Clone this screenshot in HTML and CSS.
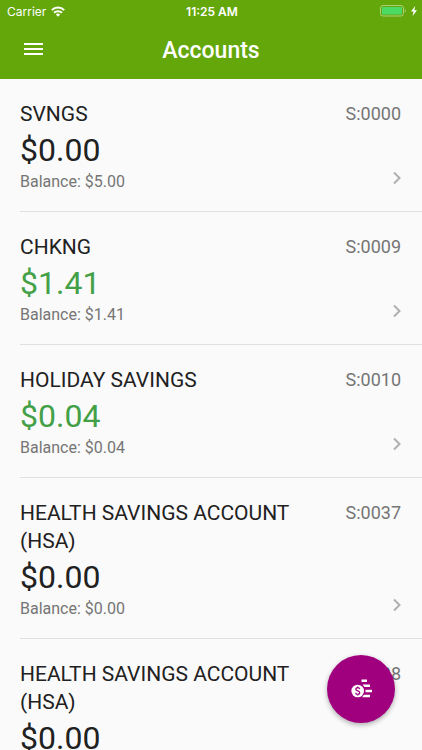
FILE: index.html
```html
<!DOCTYPE html>
<html lang="en">

<head>
    <meta charset="UTF-8" />
    <meta name="viewport" content="width=device-width, initial-scale=1.0" />
    <title>Accounts</title>
    <link rel="stylesheet" href="styles.css">
</head>

<body>
    <header class="header">
        <div class="status">
            <div class="carrier">
                <span>Carrier</span>
                <svg width="14" height="11" viewBox="0 0 14 11" fill="none" stroke="#fff" stroke-width="2">
                    <path d="M0.8 4.1a8.8 8.8 0 0 1 12.4 0" />
                    <path d="M3 6.8a5.7 5.7 0 0 1 8 0" />
                    <path d="M7 10.8L4.8 8.600a3 3 0 0 1 4.400 0z" fill="#fff" stroke="none" />
                </svg>
            </div>
            <div class="time">11:25 AM</div>
            <div class="power">
                <svg width="26" height="12" viewBox="0 0 26 12">
                    <rect x="0.5" y="0.5" width="23" height="10.5" rx="2.5" fill="none" stroke="#a9d07a" />
                    <rect x="2" y="2" width="20" height="7.5" rx="1" fill="#4cd964" />
                    <path d="M24.7 4v3.6a2 2 0 0 0 0-3.6z" fill="#a9d07a" />
                </svg>
                <svg width="6" height="10" viewBox="0 0 6 10" fill="#fff">
                    <path d="M4.2 0L0 5.6h2.5L1.6 10L6 4.2H3.4z" />
                </svg>
            </div>
        </div>
        <div class="toolbar">
            <button class="menu" type="button" aria-label="Menu">
                <svg width="20" height="14" viewBox="0 0 20 14" fill="#fff">
                    <path d="M0 1h19v2H0zM0 6h19v2H0zM0 11h19v2H0z" />
                </svg>
            </button>
            <h1>Accounts</h1>
        </div>
    </header>

    <main class="accounts">
        <a class="account" href="#">
            <div class="info">
                <h2>SVNGS</h2>
                <div class="amount">$0.00</div>
                <div class="balance">Balance: $5.00</div>
            </div>
            <div class="side">
                <span class="number">S:0000</span>
                <svg class="chevron" width="9" height="14" viewBox="0 0 9 14"><path d="M2 1.500L7.500 7L2 12.500" /></svg>
            </div>
        </a>
        <a class="account" href="#">
            <div class="info">
                <h2>CHKNG</h2>
                <div class="amount positive">$1.41</div>
                <div class="balance">Balance: $1.41</div>
            </div>
            <div class="side">
                <span class="number">S:0009</span>
                <svg class="chevron" width="9" height="14" viewBox="0 0 9 14"><path d="M2 1.500L7.500 7L2 12.500" /></svg>
            </div>
        </a>
        <a class="account" href="#">
            <div class="info">
                <h2>HOLIDAY SAVINGS</h2>
                <div class="amount positive">$0.04</div>
                <div class="balance">Balance: $0.04</div>
            </div>
            <div class="side">
                <span class="number">S:0010</span>
                <svg class="chevron" width="9" height="14" viewBox="0 0 9 14"><path d="M2 1.500L7.500 7L2 12.500" /></svg>
            </div>
        </a>
        <a class="account" href="#">
            <div class="info">
                <h2>HEALTH SAVINGS ACCOUNT (HSA)</h2>
                <div class="amount">$0.00</div>
                <div class="balance">Balance: $0.00</div>
            </div>
            <div class="side">
                <span class="number">S:0037</span>
                <svg class="chevron" width="9" height="14" viewBox="0 0 9 14"><path d="M2 1.500L7.500 7L2 12.500" /></svg>
            </div>
        </a>
        <a class="account" href="#">
            <div class="info">
                <h2>HEALTH SAVINGS ACCOUNT (HSA)</h2>
                <div class="amount">$0.00</div>
            </div>
            <div class="side">
                <span class="number">S:0038</span>
            </div>
        </a>
    </main>

    <!-- Floating action button -->
    <button class="fab" type="button" aria-label="Move money">
        <svg width="22" height="20" viewBox="0 0 22 20" fill="#fff">
            <path d="M11.500 0.500h5.500v2.500h-5.500zM12.500 5.500h7.500v2.500h-5.500zM15.500 10.700h6.500v2.500h-6.500zM14 15.800h6v2.500h-8z" />
            <circle cx="7.700" cy="12" r="6.300" />
            <path d="M9.700 10.200c-.2-1.100-1-1.500-2-1.500-1.100 0-1.900.6-1.900 1.500 0 2.200 3.900 1.200 3.900 3.500 0 1-.8 1.600-2 1.600-1.100 0-2-.5-2.100-1.600M7.700 7.600v1.200M7.700 15.200v1.200" fill="none" stroke="#a0007d" stroke-width="1.300" />
        </svg>
    </button>
</body>

</html>
```

FILE: styles.css
```css
* {
    box-sizing: border-box;
}

body {
    margin: 0;
    height: 100vh;
    display: flex;
    flex-direction: column;
    background-color: #fafafa;
    color: #212121;
    font-family: Roboto, "Liberation Sans", sans-serif;
}

h1,
h2 {
    margin: 0;
}

svg {
    display: block;
}

button {
    padding: 0;
    border: none;
    cursor: pointer;
}

.header {
    flex-shrink: 0;
    background-color: #64a70b;
    color: #fff;
}

/* Status bar */
.status {
    display: grid;
    grid-template-columns: 1fr auto 1fr;
    align-items: center;
    height: 22px;
    padding: 0 5px 0 7px;
    font-family: Inter, sans-serif;
    font-size: 12px;
}

.carrier,
.power {
    display: flex;
    align-items: center;
    gap: 5px;
}

.time {
    font-weight: 600;
}

.power {
    justify-content: flex-end;
}

.toolbar {
    display: grid;
    grid-template-columns: 48px 1fr 48px;
    align-items: center;
    height: 57px;
}

.toolbar h1 {
    grid-column: 2;
    font-size: 23px;
    font-weight: 500;
    text-align: center;
}

.menu {
    display: flex;
    justify-content: flex-end;
    align-items: center;
    align-self: start;
    width: 44px;
    height: 54px;
    background: none;
}

/* Account list */
.accounts {
    flex: 1;
    min-height: 0;
    overflow-y: auto;
    scrollbar-width: none;
}

.account {
    display: flex;
    gap: 16px;
    margin-left: 20px;
    padding: 21px 21px 19px 0;
    border-bottom: 1px solid #e0e0e0;
    color: inherit;
    text-decoration: none;
}

.info {
    flex: 1;
}

.account h2 {
    font-size: 21px;
    font-weight: 400;
    line-height: 28px;
}

.amount {
    font-size: 32px;
    line-height: 44px;
}

.positive {
    color: #43a047;
}

.balance {
    color: #757575;
    font-size: 16px;
    line-height: 20px;
}

.side {
    display: flex;
    flex-direction: column;
    justify-content: space-between;
    align-items: flex-end;
    padding-bottom: 7px;
}

.number {
    color: #757575;
    font-size: 18px;
    line-height: 28px;
}

.chevron {
    fill: none;
    stroke: #b0b0b0;
    stroke-width: 2;
}

.fab {
    position: fixed;
    right: 27px;
    bottom: 27px;
    display: flex;
    justify-content: center;
    align-items: center;
    width: 68px;
    height: 68px;
    border-radius: 50%;
    background-color: #a0007d;
    box-shadow: 0 2px 5px rgba(0, 0, 0, 0.3);
}
```
